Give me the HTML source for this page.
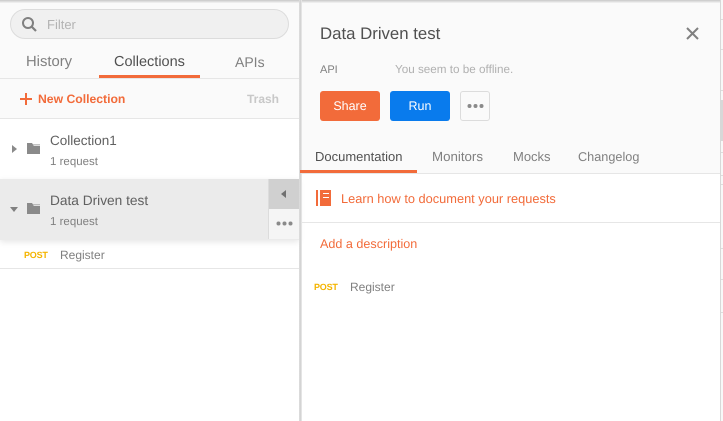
<!DOCTYPE html>
<html><head><meta charset="utf-8"><style>
html,body{margin:0;padding:0;background:#fff}
#r{position:relative;width:723px;height:421px;overflow:hidden;background:#fff;font-family:"Liberation Sans",sans-serif;text-rendering:geometricPrecision}
#r div,#r svg{position:absolute}
.t{white-space:nowrap;line-height:20px;height:20px}
.l{left:721px;width:2px;height:1px;background:#ddd}
</style></head><body><div id="r">
<div style="left:0;top:0;width:299px;height:118px;background:#fafafa"></div>
<div style="left:0;top:0;width:723px;height:3px;background:linear-gradient(#c8c8c8,#f5f5f5)"></div>
<div style="left:10px;top:9px;width:277px;height:28px;border:1px solid #dcdcdc;border-radius:15px;background:#f0f0f0"></div>
<svg style="left:21px;top:16px" width="17" height="16" viewBox="0 0 17 16"><circle cx="7" cy="7" r="5" fill="none" stroke="#808080" stroke-width="2"/><path d="M10.5 10.5L15 15" stroke="#808080" stroke-width="2.2"/></svg>
<div class="t" style="left:47px;top:15px;font-size:13px;color:#b3b3b3">Filter</div>
<div class="t" style="left:26px;top:52px;font-size:14.8px;color:#808080">History</div>
<div class="t" style="left:114px;top:52px;font-size:14.5px;color:#505050">Collections</div>
<div class="t" style="left:235px;top:52px;font-size:14px;color:#808080">APIs</div>
<div style="left:99px;top:75px;width:101px;height:3px;background:#f26b3a"></div>
<div style="left:0;top:78px;width:299px;height:1px;background:#e6e6e6"></div>
<svg style="left:20px;top:93px" width="12" height="12"><path d="M6 0V12M0 6H12" stroke="#f26b3a" stroke-width="2"/></svg>
<div class="t" style="left:38px;top:89px;font-size:12.2px;font-weight:bold;color:#f26b3a">New Collection</div>
<div class="t" style="left:247px;top:89px;font-size:12px;font-weight:bold;color:#c8c8c8">Trash</div>
<div style="left:0;top:118px;width:299px;height:1px;background:#e6e6e6"></div>

<svg style="left:12px;top:145px" width="5" height="8"><path d="M0 0L5 4L0 8Z" fill="#8a8a8a"/></svg>
<svg style="left:27px;top:143px" width="13" height="11"><path d="M0 0H5L6 1.5H13V11H0Z" fill="#8a8a8a"/><path d="M6.500 2H13V3H6.500Z" fill="#ddd"/></svg>
<div class="t" style="left:50px;top:131px;font-size:13.5px;color:#606060">Collection1</div>
<div class="t" style="left:50px;top:152px;font-size:11.5px;color:#808080">1 request</div>

<div style="left:0;top:179px;width:299px;height:61px;background:#ebebeb;box-shadow:0 2px 6px rgba(0,0,0,.1)"></div>
<div style="left:268px;top:179px;width:31px;height:30px;background:#d0d0d0"></div>
<div style="left:268px;top:209px;width:31px;height:30px;background:#f5f5f5"></div>
<div style="left:268px;top:179px;width:1px;height:60px;background:#dcdcdc"></div>
<svg style="left:281px;top:190px" width="5" height="8"><path d="M5 0L0 4L5 8Z" fill="#707070"/></svg>
<svg style="left:276px;top:221px" width="17" height="5"><circle cx="2.500" cy="2.500" r="2" fill="#8a8a8a"/><circle cx="8.500" cy="2.500" r="2" fill="#8a8a8a"/><circle cx="14.500" cy="2.500" r="2" fill="#8a8a8a"/></svg>
<svg style="left:10px;top:207px" width="8" height="5"><path d="M0 0H8L4 5Z" fill="#808080"/></svg>
<svg style="left:27px;top:203px" width="13" height="11"><path d="M0 0H5L6 1.500H13V11H0Z" fill="#8a8a8a"/><path d="M6.500 2H13V3H6.500Z" fill="#ddd"/></svg>
<div class="t" style="left:50px;top:191px;font-size:13.7px;color:#606060">Data Driven test</div>
<div class="t" style="left:50px;top:212px;font-size:11.5px;color:#808080">1 request</div>

<div class="t" style="left:24px;top:245px;font-size:9px;font-weight:bold;color:#f4b400;letter-spacing:-.2px">POST</div>
<div class="t" style="left:60px;top:245px;font-size:12px;color:#808080">Register</div>
<div style="left:0;top:268px;width:299px;height:1px;background:#e6e6e6"></div>

<div style="left:299px;top:0;width:3px;height:421px;background:linear-gradient(90deg,#e0e0e0,#d0d0d0,#eee)"></div>
<div style="left:302px;top:3px;width:418px;height:170px;background:#fafafa"></div>
<div style="left:720px;top:0;width:3px;height:421px;background:#f8f8f8;border-left:1px solid #d8d8d8;box-sizing:border-box"></div>
<div style="left:721px;top:100px;width:2px;height:41px;background:#d8d8d8"></div>
<div class="l" style="top:19px"></div><div class="l" style="top:49px"></div><div class="l" style="top:90px"></div><div class="l" style="top:152px"></div><div class="l" style="top:175px"></div><div class="l" style="top:184px"></div><div class="l" style="top:248px"></div><div class="l" style="top:279px"></div><div class="l" style="top:312px"></div>

<div class="t" style="left:320px;top:24px;font-size:16.8px;color:#505050">Data Driven test</div>
<svg style="left:686px;top:27px" width="13" height="13"><path d="M1 1L12 12M12 1L1 12" stroke="#808080" stroke-width="2"/></svg>
<div class="t" style="left:320px;top:60px;font-size:11px;color:#808080">API</div>
<div class="t" style="left:395px;top:60px;font-size:11.700px;color:#b0b0b0">You seem to be offline.</div>
<div style="left:320px;top:91px;width:60px;height:30px;background:#f26b3a;border-radius:3px"></div>
<div class="t" style="left:320px;top:96px;width:60px;text-align:center;font-size:12.5px;color:#fff">Share</div>
<div style="left:390px;top:91px;width:60px;height:30px;background:#097bed;border-radius:3px"></div>
<div class="t" style="left:390px;top:96px;width:60px;text-align:center;font-size:12.5px;color:#fff">Run</div>
<div style="left:460px;top:91px;width:28px;height:28px;border:1px solid #dcdcdc;border-radius:3px;background:#fafafa"></div>
<svg style="left:467px;top:103px" width="17" height="6"><circle cx="2.500" cy="3" r="2" fill="#8a8a8a"/><circle cx="8.500" cy="3" r="2" fill="#8a8a8a"/><circle cx="14.500" cy="3" r="2" fill="#8a8a8a"/></svg>

<div class="t" style="left:315px;top:147px;font-size:13px;color:#505050">Documentation</div>
<div class="t" style="left:432px;top:147px;font-size:13.300px;color:#808080">Monitors</div>
<div class="t" style="left:513px;top:147px;font-size:13px;color:#808080">Mocks</div>
<div class="t" style="left:578px;top:147px;font-size:12.700px;color:#808080">Changelog</div>
<div style="left:302px;top:173px;width:418px;height:1px;background:#e6e6e6"></div>
<div style="left:300px;top:170px;width:117px;height:3px;background:#f26b3a"></div>

<svg style="left:316px;top:190px" width="16" height="16"><path d="M0 0H2V16H0ZM4 0H15V16H4Z" fill="#f26b3a"/><path d="M7 3H13V4H7ZM7 7H13V8H7Z" fill="#fff"/></svg>
<div class="t" style="left:341px;top:189px;font-size:12.800px;color:#f26b3a">Learn how to document your requests</div>
<div style="left:302px;top:222px;width:418px;height:1px;background:#e6e6e6"></div>
<div class="t" style="left:320px;top:234px;font-size:12.600px;color:#f26b3a">Add a description</div>
<div class="t" style="left:314px;top:277px;font-size:9px;font-weight:bold;color:#f4b400;letter-spacing:-.2px">POST</div>
<div class="t" style="left:350px;top:277px;font-size:12px;color:#808080">Register</div>
</div></body></html>
